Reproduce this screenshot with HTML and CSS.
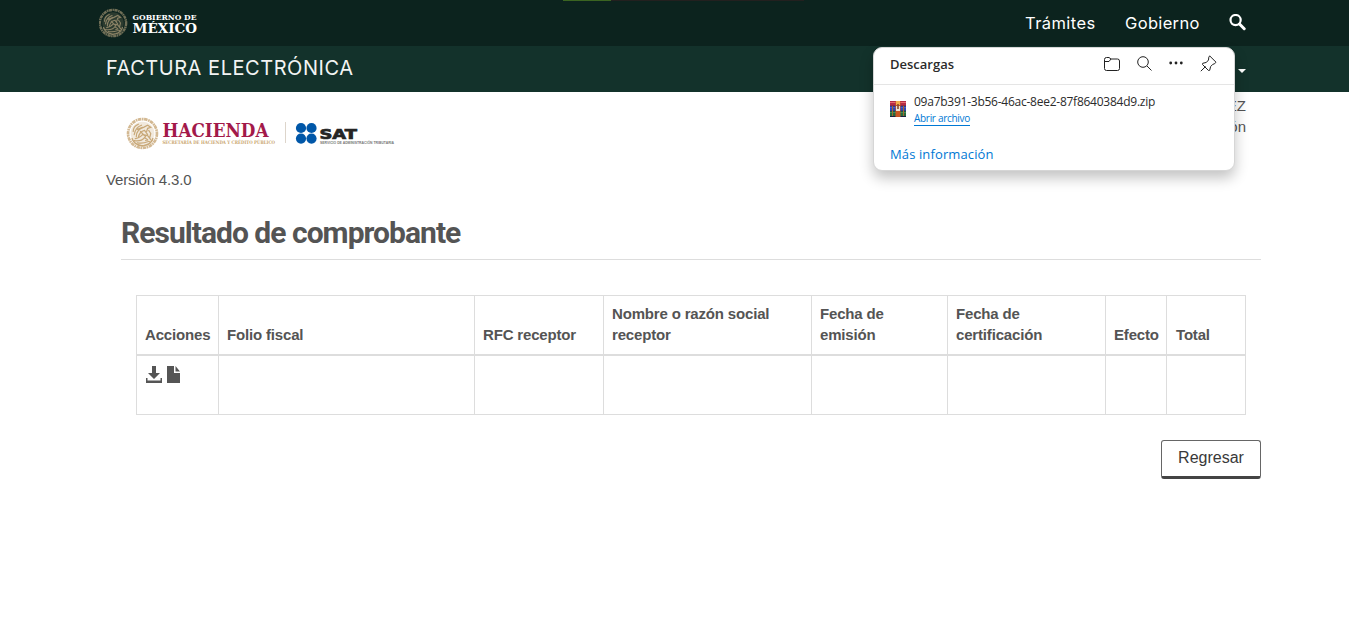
FILE: index.html
```html
<!DOCTYPE html>
<html lang="es">
<head>
<meta charset="utf-8">
<title>Factura Electrónica</title>
<link rel="stylesheet" href="styles.css">
</head>
<body>
<svg class="defs" width="0" height="0" aria-hidden="true">
  <symbol id="seal" viewBox="0 0 32 32">
    <g fill="none" stroke="currentColor" stroke-linecap="round">
      <circle cx="16" cy="16" r="14" stroke-width="2.6" stroke-dasharray="3.4 .6 1.6 .5" stroke-linecap="butt" opacity=".8"/>
      <circle cx="16" cy="16" r="11.5" fill="currentColor" fill-opacity=".25" stroke="none"/>
      <path d="M7 14q0-5 5-7M8 17q1-7 7-9M10 19q0-7 7-9l4-2 3 2-3 1-1 3M12 20q1-6 6-7l3 4M9 21q5-1 7-4l5 1 3 4M8 23q7 1 10-3l3 2M11 25q5 1 10-1M22 13l2 3-1 4M14 14l5 5M11 12l5-2M19 23l4 1" stroke-width="1.2"/>
      <path d="M6 21q2 6 10 7 8-1 10-7" stroke-width="1.5" stroke-dasharray="2 .8"/>
    </g>
  </symbol>
</svg>

<header class="topbar">
  <div class="progress"><i></i></div>
  <svg class="gob-logo" width="102" height="32" viewBox="0 0 102 32">
    <use href="#seal" x="-1" y="1" width="30" height="30" class="seal-dark"/>
    <text class="slab" x="33.5" y="12.6" font-size="8.2" textLength="64" lengthAdjust="spacingAndGlyphs">GOBIERNO DE</text>
    <text class="slab" x="33.5" y="26.2" font-size="12.8" textLength="64.5" lengthAdjust="spacingAndGlyphs">MÉXICO</text>
  </svg>
  <nav class="nav">
    <a class="nav-tramites">Trámites</a>
    <a class="nav-gobierno">Gobierno</a>
    <svg width="17" height="17" viewBox="0 0 17 17"><circle cx="6.6" cy="6.1" r="5.1" fill="none" stroke="#fff" stroke-width="2.2"/><path d="M10.5 10l4.7 4.7" stroke="#fff" stroke-width="3" stroke-linecap="round"/></svg>
  </nav>
</header>
<div class="subbar">
  <span class="subbar-title">FACTURA ELECTRÓNICA</span>
  <span class="caret"></span>
</div>

<main class="page">
  <div class="brand-row">
    <svg class="brand" width="280" height="36" viewBox="0 0 280 36">
      <use href="#seal" x="0" y="2" width="33" height="33" class="seal-gold"/>
      <text class="slab hacienda" x="36.5" y="21.6" font-size="18" textLength="106" lengthAdjust="spacingAndGlyphs">HACIENDA</text>
      <text class="slab secretaria" x="36.5" y="29.3" font-size="4.8" textLength="112.5" lengthAdjust="spacingAndGlyphs">SECRETARÍA DE HACIENDA Y CRÉDITO PÚBLICO</text>
      <path d="M159.5 7v21" stroke="#ddd5cb"/>
      <g fill="#0057a8"><circle cx="175" cy="13" r="5.1"/><circle cx="185.5" cy="13" r="5.1"/><circle cx="175" cy="23.6" r="5.1"/><circle cx="185.5" cy="23.6" r="5.1"/></g>
      <text class="sat" x="193.5" y="23.6" font-size="13.5" textLength="37.5" lengthAdjust="spacingAndGlyphs">SAT</text>
      <text class="sat-sub" x="194" y="28.9" font-size="3.8" textLength="74" lengthAdjust="spacingAndGlyphs">SERVICIO DE ADMINISTRACIÓN TRIBUTARIA</text>
    </svg>
    <div class="user"><div>EZ</div><div>ón</div></div>
  </div>
  <p class="version">Versión 4.3.0</p>
  <h1 class="title"><span>Resultado de comprobante</span></h1>
  <table class="results">
    <colgroup><col class="c1"><col class="c2"><col class="c3"><col class="c4"><col class="c5"><col class="c6"><col class="c7"><col class="c8"></colgroup>
    <thead>
      <tr><th>Acciones</th><th>Folio fiscal</th><th>RFC receptor</th><th>Nombre o razón social receptor</th><th>Fecha de emisión</th><th>Fecha de certificación</th><th>Efecto</th><th class="total">Total</th></tr>
    </thead>
    <tbody>
      <tr>
        <td><div class="actions">
          <svg width="16" height="17" viewBox="0 0 16 17"><path d="M6 0h4v7h4l-6 6-6-6h4zM0 12h1.5v2.5h13V12H16v5H0z" fill="#555"/></svg>
          <svg width="13" height="17" viewBox="0 0 13 17"><path d="M0 0h7v7h6v10H0zM8.5 0L13 5.5H8.5z" fill="#555"/></svg>
        </div></td>
        <td></td><td></td><td></td><td></td><td></td><td></td><td></td>
      </tr>
    </tbody>
  </table>
  <div class="buttons"><button class="back">Regresar</button></div>
</main>

<aside class="downloads">
  <div class="dl-head">
    <span class="dl-title">Descargas</span>
    <div class="dl-tools">
      <svg width="16" height="14" viewBox="0 0 16 14"><path d="M.5 2.5a2 2 0 0 1 2-2h2.5l2 1.5h6.5a2 2 0 0 1 2 2v7.5a2 2 0 0 1-2 2h-11a2 2 0 0 1-2-2zM.5 4.5h4.500l2-2.500"/></svg>
      <svg width="15" height="15" viewBox="0 0 15 15"><circle cx="6" cy="6" r="5.3"/><path d="M10 10l4.5 4.5"/></svg>
      <svg class="dots" width="14" height="4" viewBox="0 0 14 4"><g fill="#222" stroke="none"><circle cx="1.7" cy="2" r="1.4"/><circle cx="7" cy="2" r="1.4"/><circle cx="12.3" cy="2" r="1.4"/></g></svg>
      <svg width="17" height="17" viewBox="0 0 17 17"><path d="M9.7.9l6.3 6.3-1.3 1.5-2 .7-2.1 2.2-.9 3.7-1.2.2-6-6 .2-1.2 3.7-.9L8.500 5l.3-2.800zM5.600 11.500L.8 16.200" stroke-linejoin="round"/></svg>
    </div>
  </div>
  <div class="dl-body">
    <svg width="16" height="16" viewBox="0 0 16 16">
      <path fill="#b42c45" d="M0 0h16v5H0z"/><path fill="#e56b70" d="M0 1h16v1H0z"/>
      <path fill="#3147b6" d="M0 5h16v5H0z"/><path fill="#4a5cc8" d="M0 6h16v1H0z"/>
      <path fill="#276b3e" d="M0 10h16v6H0z"/><path fill="#3f8f57" d="M0 11h16v1H0z"/>
      <path fill="#1b2040" d="M0 4.700h16v.6H0zM0 9.700h16v.6H0zM0 15h16v1H0z"/>
      <path fill="#a5672d" d="M2 5h1v10H2zM13 5h1v10h-1z"/><path fill="#c95722" d="M5.500 0h5v16h-5z"/>
      <path fill="#f2b04b" d="M6 0h4v4H6z"/><path fill="#eee3d0" d="M6 5h4v5H6z"/><path fill="#8b4b28" d="M7.200 3h1.600v5H7.200z"/>
    </svg>
    <div class="dl-file">
      <div class="dl-name">09a7b391-3b56-46ac-8ee2-87f8640384d9.zip</div>
      <a class="dl-open">Abrir archivo</a>
    </div>
  </div>
  <a class="dl-more">Más información</a>
</aside>
</body>
</html>
```
FILE: styles.css
```css
* { box-sizing: border-box; }
body { margin: 0; background: #fff; color: #545454; font: 15px/21.43px "Liberation Sans", Arial, sans-serif; height: 629px; overflow: hidden; }
.defs { display: block; height: 0; }
.topbar { height: 46px; background: #0c231e; display: flex; justify-content: space-between; padding: 7px 103px 0 99px; position: relative; }
.progress { position: absolute; left: 563px; top: 0; width: 241px; height: 1px; background: #23201f; }
.progress i { display: block; width: 48px; height: 1px; background: #3b6421; }
.seal-dark { color: #8a8265; }
.seal-gold { color: #c8a878; }
.slab { font-family: "DejaVu Serif", serif; font-weight: 700; fill: #fff; }
.slab.hacienda { fill: #a3194a; }
.slab.secretaria { fill: #c9a56d; }
.sat { font-family: "DejaVu Sans", sans-serif; font-weight: 700; fill: #252525; stroke: #252525; stroke-width: .7; }
.sat-sub { font-family: "Liberation Sans", sans-serif; font-weight: 700; fill: #777; }
.nav { display: flex; align-items: flex-start; padding-top: 5px; color: #fff; font: 16.5px/22px Inter, sans-serif; }
.nav-tramites { width: 100px; letter-spacing: .42px; }
.nav-gobierno { width: 104px; letter-spacing: .34px; }
.nav svg { margin-top: 2px; }
.subbar { height: 46px; background: #13322b; display: flex; align-items: center; justify-content: space-between; padding: 0 103px 0 106px; }
.subbar-title { color: #f2f4f3; font: 20px/24px Inter, sans-serif; white-space: nowrap; letter-spacing: .54px; margin-top: -2px; }
.caret { border: 4px solid transparent; border-top-color: #fff; border-bottom: 0; margin-top: 3px; }
.page { padding: 0 88px 0 106px; }
.brand-row { height: 77px; display: flex; justify-content: space-between; padding: 23px 15px 0 20px; }
.user { text-align: right; margin-top: -20px; }
.version { margin: 0; letter-spacing: -.17px; }
.title { margin: 22px 0 35px 15px; height: 48px; border-bottom: 1px solid #ddd; font: 700 30px/38px Roboto, sans-serif; padding-top: 2px; letter-spacing: -.97px; }
.results { margin-left: 30px; width: 1110px; table-layout: fixed; border-collapse: collapse; }
.results th, .results td { border: 1px solid #ddd; padding: 8px; text-align: left; vertical-align: bottom; }
.results th { border-bottom-width: 2px; height: 59px; line-height: 21px; padding: 7px 7px 9px 8px; letter-spacing: -.17px; }
.results td { height: 59px; vertical-align: top; }
.results th.total { padding-left: 9px; }
.c1 { width: 82px; } .c2 { width: 256px; } .c3 { width: 129px; } .c4 { width: 208px; }
.c5 { width: 136px; } .c6 { width: 158px; } .c7 { width: 61px; } .c8 { width: 79px; }
.actions { display: flex; gap: 5px; padding: 2px 0 0 1px; }
.buttons { display: flex; justify-content: flex-end; margin-top: 25px; }
.back { width: 100px; height: 39px; background: #fff; border: 1px solid #666; border-bottom: 3px solid #444; border-radius: 3px; color: #393939; font: 16px/31px "Liberation Sans", sans-serif; padding: 0 0 1px; }
.downloads { position: absolute; left: 873px; top: 47px; width: 362px; height: 124px; background: #fff; border: 1px solid #d6d6d6; border-radius: 9px; box-shadow: 0 7px 14px rgba(0,0,0,.24); font-family: "Open Sans", sans-serif; color: #2b2b2b; }
.dl-head { display: flex; justify-content: space-between; height: 37px; border-bottom: 1px solid #e5e5e5; padding: 0 17px 0 16px; }
.dl-title { font-size: 13px; font-weight: 600; line-height: 33px; }
.dl-tools { display: flex; align-items: center; gap: 17px; padding-bottom: 5px; }
.dl-tools svg { fill: none; stroke: #222; stroke-width: 1; }
.dl-tools .dots { margin-top: -2px; }
.dl-body { display: flex; gap: 8px; height: 60px; padding: 8px 0 0 16px; }
.dl-body > svg { margin-top: 8px; }
.dl-name { font-size: 12px; line-height: 18px; letter-spacing: -.25px; white-space: nowrap; }
.dl-open { display: block; width: 56px; white-space: nowrap; color: #0078d4; font-size: 10px; line-height: 14px; letter-spacing: -.3px; border-bottom: 1px solid #0078d4; }
.dl-more { display: block; color: #0078d4; font-size: 13px; line-height: 18px; margin-left: 16px; letter-spacing: .12px; }
```
